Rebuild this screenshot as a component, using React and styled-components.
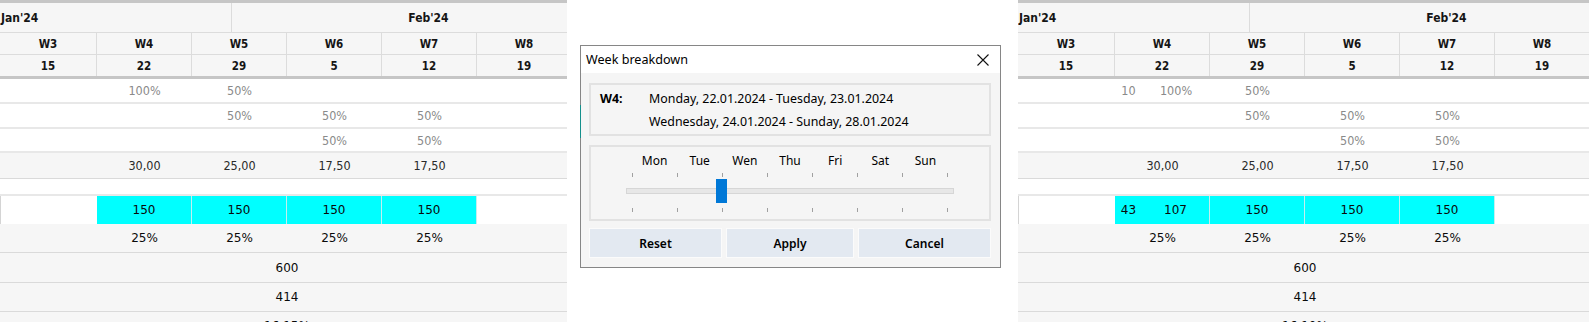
import React from "react";
import styled, { createGlobalStyle } from "styled-components";

const GlobalStyle = createGlobalStyle`
  html, body {
    margin: 0;
    padding: 0;
    background: #fff;
  }
  body {
    width: 1589px;
    height: 322px;
    overflow: hidden;
    font-family: "DejaVu Sans Condensed", "DejaVu Sans", "Liberation Sans", sans-serif;
  }
`;

const weeks = [
  ["W3", "15"],
  ["W4", "22"],
  ["W5", "29"],
  ["W6", "5"],
  ["W7", "12"],
  ["W8", "19"],
];

const days = ["Mon", "Tue", "Wen", "Thu", "Fri", "Sat", "Sun"];

const Planner = ({ split, width, offset, tail }) => (
  <Sheet $width={width} $offset={offset}>
    <Rule />
    <MonthRow>
      <Month $w={232}>Jan'24</Month>
      <Month $w={394} $center>
        Feb'24
      </Month>
    </MonthRow>
    <HeadRow $h={22} $line>
      {weeks.map(([w]) => (
        <HeadCell key={w}>{w}</HeadCell>
      ))}
    </HeadRow>
    <HeadRow $h={21}>
      {weeks.map(([w, d]) => (
        <HeadCell key={w}>{d}</HeadCell>
      ))}
    </HeadRow>
    <Rule />

    <Row $h={25}>
      <Cell />
      {split ? (
        <Split>
          <Cell $tone="muted">10</Cell>
          <Cell $tone="muted">100%</Cell>
        </Split>
      ) : (
        <Cell $tone="muted">100%</Cell>
      )}
      <Cell $tone="muted">50%</Cell>
    </Row>
    <Row $h={25}>
      <Cell />
      <Cell />
      <Cell $tone="muted">50%</Cell>
      <Cell $tone="muted">50%</Cell>
      <Cell $tone="muted">50%</Cell>
    </Row>
    <Row $h={24}>
      <Cell />
      <Cell />
      <Cell />
      <Cell $tone="muted">50%</Cell>
      <Cell $tone="muted">50%</Cell>
    </Row>
    <Row $h={26} $gray>
      <Cell />
      <Cell $tone="dark">30,00</Cell>
      <Cell $tone="dark">25,00</Cell>
      <Cell $tone="dark">17,50</Cell>
      <Cell $tone="dark">17,50</Cell>
    </Row>
    <Row $h={17} />
    <Row $h={28} $plain>
      <Cell $edge />
      {split ? (
        <Cell $fill>
          <Split>
            <Cell $tone="main">43</Cell>
            <Cell $tone="main">107</Cell>
          </Split>
        </Cell>
      ) : (
        <Cell $fill $tone="main">
          150
        </Cell>
      )}
      <Cell $fill $tone="main">
        150
      </Cell>
      <Cell $fill $tone="main">
        150
      </Cell>
      <Cell $fill $tone="main">
        150
      </Cell>
    </Row>
    <Row $h={29} $gray>
      <Cell />
      <Cell $tone="main">25%</Cell>
      <Cell $tone="main">25%</Cell>
      <Cell $tone="main">25%</Cell>
      <Cell $tone="main">25%</Cell>
    </Row>
    <Row $h={30} $gray>
      <Cell />
      <Cell $span $tone="main">
        600
      </Cell>
    </Row>
    <Row $h={29} $gray>
      <Cell />
      <Cell $span $tone="main">
        414
      </Cell>
    </Row>
    <Row $h={29} $gray>
      <Cell />
      <Cell $span $tone="main">
        {tail}
      </Cell>
    </Row>
  </Sheet>
);

const WeekDialog = () => (
  <Dialog>
    <FocusMark />
    <TitleBar>
      <span>Week breakdown</span>
      <svg width="12" height="12" viewBox="0 0 12 12">
        <path d="M0.5 0.5 L11.5 11.5 M11.5 0.5 L0.5 11.5" stroke="#111" strokeWidth="1.1" />
      </svg>
    </TitleBar>
    <Body>
      <InfoBox>
        <WeekTag>W4:</WeekTag>
        <div>
          <div>Monday, 22.01.2024 - Tuesday, 23.01.2024</div>
          <div>Wednesday, 24.01.2024 - Sunday, 28.01.2024</div>
        </div>
      </InfoBox>
      <SliderBox>
        <DayLabels>
          {days.map((d) => (
            <span key={d}>{d}</span>
          ))}
        </DayLabels>
        <Ticks>
          {Array.from({ length: 8 }, (_, i) => (
            <Tick key={i} />
          ))}
        </Ticks>
        <TrackArea>
          <Track>
            <Thumb $pos={2} />
          </Track>
        </TrackArea>
        <Ticks>
          {Array.from({ length: 8 }, (_, i) => (
            <Tick key={i} />
          ))}
        </Ticks>
      </SliderBox>
      <Buttons>
        <Button>Reset</Button>
        <Button>Apply</Button>
        <Button>Cancel</Button>
      </Buttons>
    </Body>
  </Dialog>
);

const App = () => (
  <>
    <GlobalStyle />
    <Page>
      <Planner width="567px" tail="16,15%" />
      <WeekDialog />
      <Planner split width="571px" offset={17} tail="16,10%" />
    </Page>
  </>
);

const COLS = "97px repeat(5, 95px)";

const Page = styled.div`
  display: flex;
  align-items: flex-start;
  height: 322px;
  overflow: hidden;
`;

const Sheet = styled.div`
  flex: none;
  width: ${(p) => p.$width};
  margin-left: ${(p) => p.$offset || 0}px;
  height: 322px;
  overflow: hidden;
`;

const Rule = styled.div`
  width: 572px;
  height: 3px;
  background: #c6c6c6;
`;

const MonthRow = styled.div`
  display: flex;
  width: 626px;
  height: 30px;
  box-sizing: border-box;
  background: #f6f6f6;
  border-bottom: 1px solid #dcdcdc;
`;

const Month = styled.div`
  flex: none;
  width: ${(p) => p.$w}px;
  box-sizing: border-box;
  display: flex;
  align-items: center;
  justify-content: ${(p) => (p.$center ? "center" : "flex-start")};
  padding-left: ${(p) => (p.$center ? 0 : 1)}px;
  border-right: 1px solid #dcdcdc;
  font-size: 12px;
  font-weight: bold;
  color: #151515;
`;

const HeadRow = styled.div`
  display: grid;
  grid-template-columns: ${COLS};
  height: ${(p) => p.$h}px;
  box-sizing: border-box;
  background: #f6f6f6;
  border-bottom: ${(p) => (p.$line ? "1px solid #dcdcdc" : "none")};
`;

const HeadCell = styled.div`
  display: flex;
  align-items: center;
  justify-content: center;
  border-right: 1px solid #dcdcdc;
  font-size: 11.5px;
  font-weight: bold;
  color: #151515;
`;

const Row = styled.div`
  display: grid;
  grid-template-columns: ${COLS};
  width: 572px;
  height: ${(p) => p.$h}px;
  box-sizing: border-box;
  background: ${(p) => (p.$gray ? "#f6f6f6" : "#fff")};
  border-bottom: ${(p) =>
    p.$plain ? "none" : p.$gray ? "1px solid #dadada" : "2px solid #e8e8e8"};
`;

const toneColor = { muted: "#8a8a8a", dark: "#2a2a2a", main: "#0a0a0a" };

const Cell = styled.div`
  display: flex;
  align-items: center;
  justify-content: center;
  min-width: 0;
  grid-column: ${(p) => (p.$span ? "2 / 6" : "auto")};
  background: ${(p) => (p.$fill ? "#00ffff" : "transparent")};
  border-left: ${(p) => (p.$edge ? "1px solid #d4d4d4" : "none")};
  border-right: ${(p) => (p.$fill ? "1px solid #c4eeee" : "none")};
  font-family: ${(p) =>
    p.$tone === "main"
      ? '"DejaVu Sans", "Liberation Sans", sans-serif'
      : '"DejaVu Sans Condensed", "DejaVu Sans", sans-serif'};
  font-size: ${(p) => (p.$tone === "main" ? "12px" : "12.5px")};
  color: ${(p) => toneColor[p.$tone] || "#000"};
`;

const Split = styled.div`
  display: grid;
  grid-template-columns: 27px 1fr;
  width: 100%;
  height: 100%;
`;

const Dialog = styled.div`
  position: relative;
  flex: none;
  display: flex;
  flex-direction: column;
  width: 421px;
  height: 223px;
  margin: 45px 0 0 13px;
  box-sizing: border-box;
  border: 1px solid #868686;
  background: #f5f5f5;
  font-family: "Noto Sans", "Open Sans", sans-serif;
  font-size: 12.4px;
  color: #000;
`;

const FocusMark = styled.div`
  position: absolute;
  left: -1px;
  top: 59px;
  width: 1px;
  height: 33px;
  background: #14908c;
`;

const TitleBar = styled.div`
  flex: none;
  height: 27px;
  display: flex;
  align-items: center;
  justify-content: space-between;
  padding: 0 11px 0 5px;
  background: #fff;
  font-size: 12.6px;
`;

const Body = styled.div`
  display: flex;
  flex-direction: column;
  gap: 9px;
  padding: 10px 9px 9px 8px;
`;

const InfoBox = styled.div`
  display: grid;
  grid-template-columns: 49px 1fr;
  height: 53px;
  box-sizing: border-box;
  padding: 2px 0 0 9px;
  border: 2px solid #e2e2e2;
  line-height: 23px;
`;

const WeekTag = styled.div`
  font-weight: bold;
`;

const SliderBox = styled.div`
  height: 76px;
  box-sizing: border-box;
  padding: 6px 35px 0;
  border: 2px solid #e2e2e2;
  font-size: 12px;
`;

const DayLabels = styled.div`
  display: grid;
  grid-template-columns: repeat(7, 1fr);
  margin: 0 6px;
  line-height: 16px;
  text-align: center;
`;

const Ticks = styled.div`
  display: flex;
  justify-content: space-between;
  margin: 4px 6px 0;
  height: 4px;
`;

const Tick = styled.span`
  width: 1px;
  height: 4px;
  background: #a0a0a0;
`;

const TrackArea = styled.div`
  display: flex;
  align-items: center;
  height: 26px;
  margin-top: 1px;
`;

const Track = styled.div`
  position: relative;
  flex: 1;
  height: 4px;
  background: #e7e7e7;
  border: 1px solid #d6d6d6;
`;

const Thumb = styled.div`
  position: absolute;
  top: 50%;
  left: ${(p) => 5 + p.$pos * 45.14 - 6}px;
  width: 11px;
  height: 24px;
  transform: translateY(-50%);
  background: #0078d7;
`;

const Buttons = styled.div`
  display: grid;
  grid-template-columns: 133px 128px 133px;
  gap: 4px;
  margin-top: -2px;
`;

const Button = styled.button`
  height: 30px;
  border: 1px solid #fbfbfb;
  background: #e3e9f1;
  font-family: "Noto Sans", "Open Sans", sans-serif;
  font-size: 12px;
  font-weight: 600;
  color: #000;
  padding: 0;
`;

export default App;
